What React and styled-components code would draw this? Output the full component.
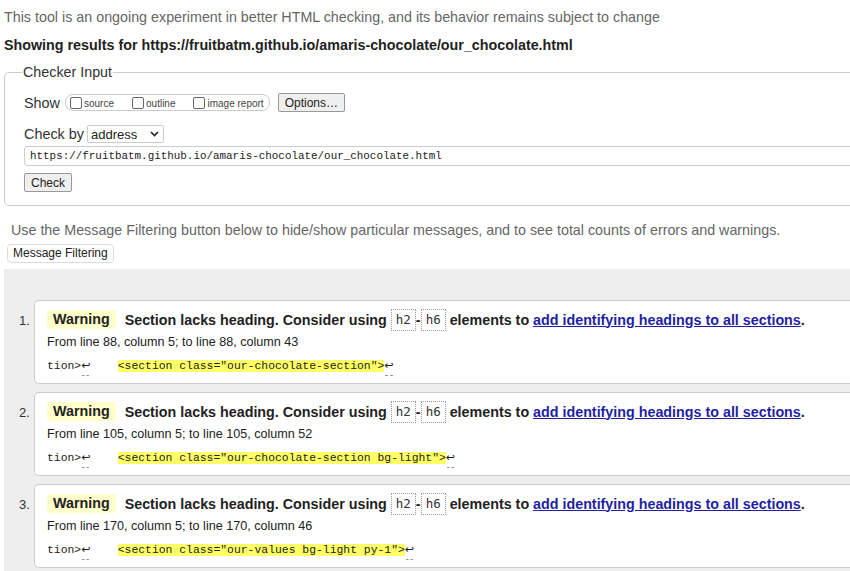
import React from "react";
import styled, { createGlobalStyle } from "styled-components";

const Global = createGlobalStyle`
  html, body { margin: 0; padding: 0; background: #fff; overflow: hidden; }
  body { font-family: "Liberation Sans", Arial, sans-serif; color: #222; }
`;

const Page = styled.div`
  width: 900px;
  padding: 7px 0 0 4px;
`;

const Intro = styled.p`
  margin: 0;
  font-size: 14.3px;
  line-height: 20px;
  color: #666;
`;

const ResultsFor = styled.h2`
  margin: 8px 0 0;
  font-size: 14.3px;
  line-height: 20px;
  font-weight: bold;
  color: #222;
`;

const Fieldset = styled.fieldset`
  margin: 9px 0 0;
  padding: 4px 19px 13px;
  border: 1px solid #ccc;
  border-radius: 5px;
`;

const Legend = styled.legend`
  padding: 0 1px;
  margin-left: -2px;
  font-size: 14.3px;
  color: #333;
`;

const Row = styled.div`
  display: flex;
  align-items: center;
  gap: ${(p) => p.$gap || 6}px;
  margin-top: ${(p) => p.$mt || 0}px;
`;

const Label = styled.span`
  font-size: 14.4px;
  color: #333;
`;

const Pill = styled.span`
  display: inline-flex;
  align-items: center;
  gap: 18px;
  height: 15px;
  padding: 0 5px 0 4px;
  border: 1px solid #ccc;
  border-radius: 8px;
`;

const Opt = styled.label`
  display: inline-flex;
  align-items: flex-end;
  gap: 2px;
  font-size: 10px;
  color: #444;
`;

const Box = styled.span`
  display: inline-block;
  width: 10px;
  height: 10px;
  border: 1px solid #666;
  border-radius: 2px;
  background: #fff;
`;

const Btn = styled.button`
  font-family: "Liberation Sans", Arial, sans-serif;
  font-size: 12px;
  color: #222;
  height: ${(p) => p.$h || 19}px;
  margin-left: ${(p) => p.$ml || 0}px;
  padding: 0 ${(p) => p.$px || 6}px;
  background: ${(p) => (p.$light ? "#fff" : "#efefef")};
  border: 1px solid ${(p) => (p.$light ? "#ddd" : "#999")};
  border-radius: ${(p) => (p.$light ? 4 : 2)}px;
  line-height: 1;
`;

const SelectBox = styled.span`
  display: inline-flex;
  align-items: center;
  justify-content: space-between;
  box-sizing: border-box;
  width: 77px;
  height: 18px;
  padding: 0 4px 0 3px;
  border: 1px solid #ccc;
  border-radius: 2px;
  font-size: 13px;
  color: #222;
`;

const UrlInput = styled.div`
  box-sizing: border-box;
  width: 870px;
  height: 20px;
  margin-top: 3px;
  padding: 0 5px;
  border: 1px solid #ccc;
  border-radius: 3px;
  font-family: "Liberation Mono", "DejaVu Sans Mono", monospace;
  font-size: 10.9px;
  line-height: 18px;
  color: #222;
`;

const Hint = styled.p`
  margin: 15px 0 0 7px;
  font-size: 14.3px;
  line-height: 18px;
  color: #666;
`;

const FilterRow = styled.div`
  margin: 4px 0 0 3px;
`;

const Results = styled.ol`
  margin: 6px 0 0;
  padding: 31px 0 20px 30px;
  background: #eee;
  list-style: none;
  counter-reset: msg;
`;

const Item = styled.li`
  position: relative;
  counter-increment: msg;
  box-sizing: border-box;
  height: 84px;
  margin-bottom: 8px;
  padding: 9px 12px 7px;
  background: #fff;
  border: 1px solid #ccc;
  border-right: none;
  border-radius: 5px 0 0 5px;
  &::before {
    content: counter(msg) ".";
    position: absolute;
    left: -16px;
    top: 10px;
    font-size: 13px;
    line-height: 20px;
    color: #333;
  }
`;

const Message = styled.p`
  margin: 0;
  display: flex;
  align-items: center;
  height: 20px;
  font-size: 14.3px;
  font-weight: bold;
  color: #222;
  white-space: pre;
`;

const Badge = styled.strong`
  display: inline-block;
  height: 19px;
  line-height: 19px;
  padding: 0 6px;
  margin-right: 9px;
  background: #ffffcc;
  border-radius: 3px;
`;

const Code = styled.code`
  display: inline-block;
  box-sizing: border-box;
  height: 22px;
  line-height: 20px;
  padding: 0 4px;
  border: 1px dotted #999;
  font-family: "DejaVu Sans Mono", monospace;
  font-size: 12.5px;
  font-weight: normal;
  color: #333;
`;

const Link = styled.a`
  color: #1f1fa3;
  text-decoration: underline;
`;

const Location = styled.p`
  margin: 2px 0 0;
  font-size: 12.6px;
  line-height: 20px;
  color: #222;
`;

const Extract = styled.p`
  margin: 4px 0 0;
  font-family: "Liberation Mono", "DejaVu Sans Mono", monospace;
  font-size: 11.4px;
  line-height: 20px;
  color: #222;
  white-space: pre;
`;

const Mark = styled.b`
  font-weight: normal;
  background: #ffff66;
`;

const Lf = styled.span`
  display: inline-block;
  position: relative;
  font-family: "DejaVu Sans", sans-serif;
  font-size: 11px;
  &::after {
    content: "";
    position: absolute;
    left: 1px;
    right: 1px;
    bottom: 0px;
    border-bottom: 1px dashed #999;
  }
`;

const Chevron = () => (
  <svg width="9" height="6" viewBox="0 0 9 6">
    <path d="M1 1l3.5 3.5L8 1" fill="none" stroke="#222" strokeWidth="1.6" />
  </svg>
);

const messages = [
  { from: "From line 88, column 5; to line 88, column 43", code: '<section class="our-chocolate-section">' },
  { from: "From line 105, column 5; to line 105, column 52", code: '<section class="our-chocolate-section bg-light">' },
  { from: "From line 170, column 5; to line 170, column 46", code: '<section class="our-values bg-light py-1">' },
];

export default function App() {
  return (
    <>
      <Global />
      <Page>
        <Intro>This tool is an ongoing experiment in better HTML checking, and its behavior remains subject to change</Intro>
        <ResultsFor>Showing results for https://fruitbatm.github.io/amaris-chocolate/our_chocolate.html</ResultsFor>
        <Fieldset>
          <Legend>Checker Input</Legend>
          <Row $gap={5} $mt={9}>
            <Label>Show</Label>
            <Pill>
              <Opt><Box />source</Opt>
              <Opt><Box />outline</Opt>
              <Opt><Box />image report</Opt>
            </Pill>
            <Btn $px={6} $ml={3}>Options…</Btn>
          </Row>
          <Row $gap={3} $mt={13}>
            <Label>Check by</Label>
            <SelectBox>address<Chevron /></SelectBox>
          </Row>
          <UrlInput>https://fruitbatm.github.io/amaris-chocolate/our_chocolate.html</UrlInput>
          <Row $mt={7}>
            <Btn $px={6}>Check</Btn>
          </Row>
        </Fieldset>
        <Hint>Use the Message Filtering button below to hide/show particular messages, and to see total counts of errors and warnings.</Hint>
        <FilterRow>
          <Btn $light $px={5}>Message Filtering</Btn>
        </FilterRow>
        <Results>
          {messages.map((m, i) => (
            <Item key={i}>
              <Message>
                <Badge>Warning</Badge>
                {"Section lacks heading. Consider using "}
                <Code>h2</Code>
                {"-"}
                <Code>h6</Code>
                {" elements to "}
                <Link href="#">add identifying headings to all sections</Link>
                {"."}
              </Message>
              <Location>{m.from}</Location>
              <Extract>
                {"tion>"}<Lf>↩</Lf>{"    "}<Mark>{m.code}</Mark><Lf>↩</Lf>
              </Extract>
            </Item>
          ))}
        </Results>
      </Page>
    </>
  );
}
